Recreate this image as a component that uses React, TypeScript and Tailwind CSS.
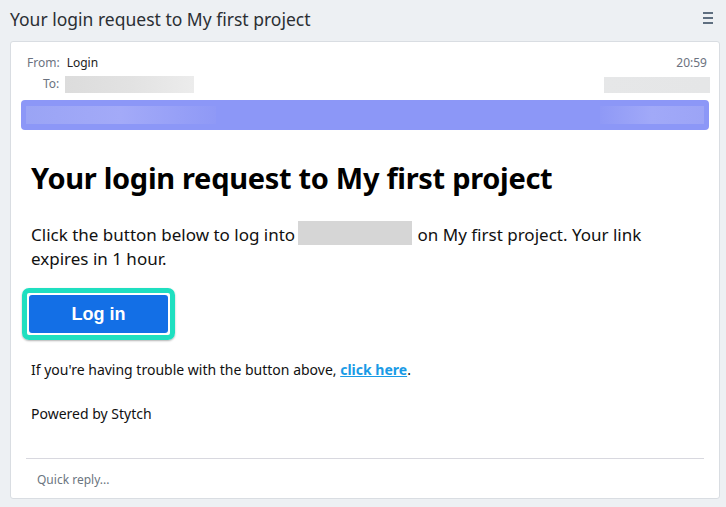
import React from 'react';

const ui = { fontFamily: '"Segoe UI", "Noto Sans", "Open Sans", sans-serif' };

export default function App() {
  return (
    <div className="w-[726px] h-[507px] bg-[#edf0f3] overflow-hidden" style={ui}>
      {/* Subject bar */}
      <div className="flex items-center justify-between h-[41px] pl-[10px] pr-[13px]">
        <h2 className="text-[17.5px] text-[#2b2f33] leading-none -mt-[1px]">Your login request to My first project</h2>
        <div className="flex flex-col gap-[3px] -mt-[5px]">
          <span className="block w-[10px] h-[2px] bg-[#5f6f80]" />
          <span className="block w-[10px] h-[2px] bg-[#5f6f80]" />
          <span className="block w-[10px] h-[2px] bg-[#5f6f80]" />
        </div>
      </div>

      {/* Message card */}
      <div className="ml-[10px] mr-[6px] h-[458px] bg-white border border-[#d9dde2] rounded-[3px] flex flex-col">
        {/* Header */}
        <div className="pl-[16px] pr-[12px] pt-[13px]">
          <div className="flex justify-between text-[12px] leading-[16px]">
            <div className="flex gap-[7px]">
              <span className="text-[#6b7280]">From:</span>
              <span className="text-[#222]">Login</span>
            </div>
            <span className="text-[#6b7280]">20:59</span>
          </div>
          <div className="flex justify-between items-center mt-[4px] text-[12px] leading-[16px]">
            <div className="flex items-center gap-[6px] pl-[16px]">
              <span className="text-[#6b7280]">To:</span>
              <span className="block w-[129px] h-[17px] bg-gradient-to-r from-[#dcdcdc] via-[#e2e2e2] to-[#ececec]" />
            </div>
            <span className="block w-[106px] h-[16px] mt-[2px] -mr-[3px] bg-gradient-to-r from-[#e6e7e8] to-[#e5e6e7]" />
          </div>
        </div>

        {/* Purple banner */}
        <div className="mx-[10px] mt-[7px] h-[30px] rounded-[4px] bg-[#8c97f7] flex items-center justify-between px-[5px]">
          <span className="block w-[190px] h-[18px] bg-gradient-to-r from-[#9aa4f5] via-[#a3aaf8] to-[#8f99f6]" />
          <span className="block w-[104px] h-[18px] bg-gradient-to-r from-[#8f99f6] via-[#a1a9f8] to-[#9ca4f6]" />
        </div>

        {/* Body */}
        <div className="px-[20px] pt-[30px] flex-1">
          <h1 className="text-[29px] font-bold text-black leading-[36px] tracking-[-0.3px]">
            Your login request to My first project
          </h1>
          <p className="mt-[27px] text-[17px] leading-[24px] text-[#111]">
            Click the button below to log into
            <span className="inline-block align-top w-[114px] h-[24px] bg-[#d6d6d6] ml-[3px] mr-[1px] -mt-[12px] translate-y-[10px]" />
            {' '}on My first project. Your link expires in 1 hour.
          </p>
          <div className="mt-[17px] inline-block rounded-[7px] border-[5px] border-[#1fdfc0] p-[2px] shadow-[0_1px_2px_rgba(0,0,0,0.3)] -ml-[9px]">
            <button
              className="block w-[139px] h-[38px] bg-[#136fe6] rounded-[3px] text-white text-[18px] font-bold"
              style={{ fontFamily: '"Liberation Sans", Arial, sans-serif' }}
            >
              Log in
            </button>
          </div>
          <p className="mt-[20px] text-[14px] leading-[20px] text-[#111]">
            If you're having trouble with the button above,{' '}
            <a className="font-bold text-[#1a9be6] underline">click here</a>.
          </p>
          <p className="mt-[24px] text-[14px] leading-[20px] text-[#111]">Powered by Stytch</p>
        </div>

        {/* Quick reply */}
        <div className="mx-[15px] border-t border-[#d8d8df] h-[40px] flex items-center px-[11px]">
          <span className="text-[12px] text-[#6b7580] mt-[2px]">Quick reply...</span>
        </div>
      </div>
    </div>
  );
}
